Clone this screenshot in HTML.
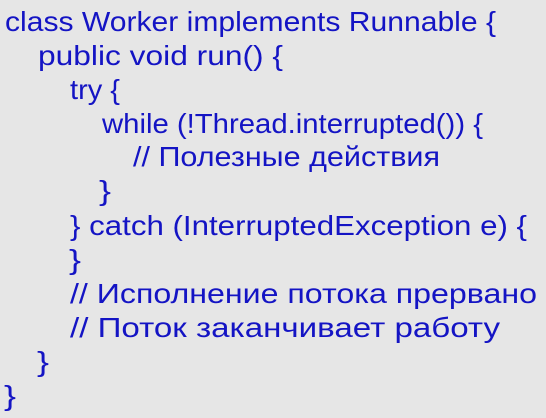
<!DOCTYPE html>
<html><head><meta charset="utf-8"><style>
html,body{margin:0;padding:0;background:#e6e6e6;}
svg{display:block}
text{font-family:"Liberation Sans","DejaVu Sans",sans-serif;font-size:28px;fill:#1414c4;}
</style></head><body>
<svg width="546" height="418" xmlns="http://www.w3.org/2000/svg">
<rect width="546" height="418" fill="#e6e6e6"/>
<text x="5" y="31" textLength="491" lengthAdjust="spacingAndGlyphs">class Worker implements Runnable {</text>
<text x="38" y="65" textLength="245" lengthAdjust="spacingAndGlyphs">public void run() {</text>
<text x="70" y="99" textLength="50" lengthAdjust="spacingAndGlyphs">try {</text>
<text x="102" y="133" textLength="381" lengthAdjust="spacingAndGlyphs">while (!Thread.interrupted()) {</text>
<text x="133" y="166" textLength="307" lengthAdjust="spacingAndGlyphs">// Полезные действия</text>
<text x="99" y="200" textLength="12" lengthAdjust="spacingAndGlyphs">}</text>
<text x="70" y="235" textLength="457" lengthAdjust="spacingAndGlyphs">} catch (InterruptedException e) {</text>
<text x="69" y="269" textLength="12" lengthAdjust="spacingAndGlyphs">}</text>
<text x="70" y="303" textLength="467" lengthAdjust="spacingAndGlyphs">// Исполнение потока прервано</text>
<text x="70" y="337" textLength="430" lengthAdjust="spacingAndGlyphs">// Поток заканчивает работу</text>
<text x="37" y="371" textLength="12" lengthAdjust="spacingAndGlyphs">}</text>
<text x="4" y="405" textLength="12" lengthAdjust="spacingAndGlyphs">}</text>
</svg>
</body></html>
